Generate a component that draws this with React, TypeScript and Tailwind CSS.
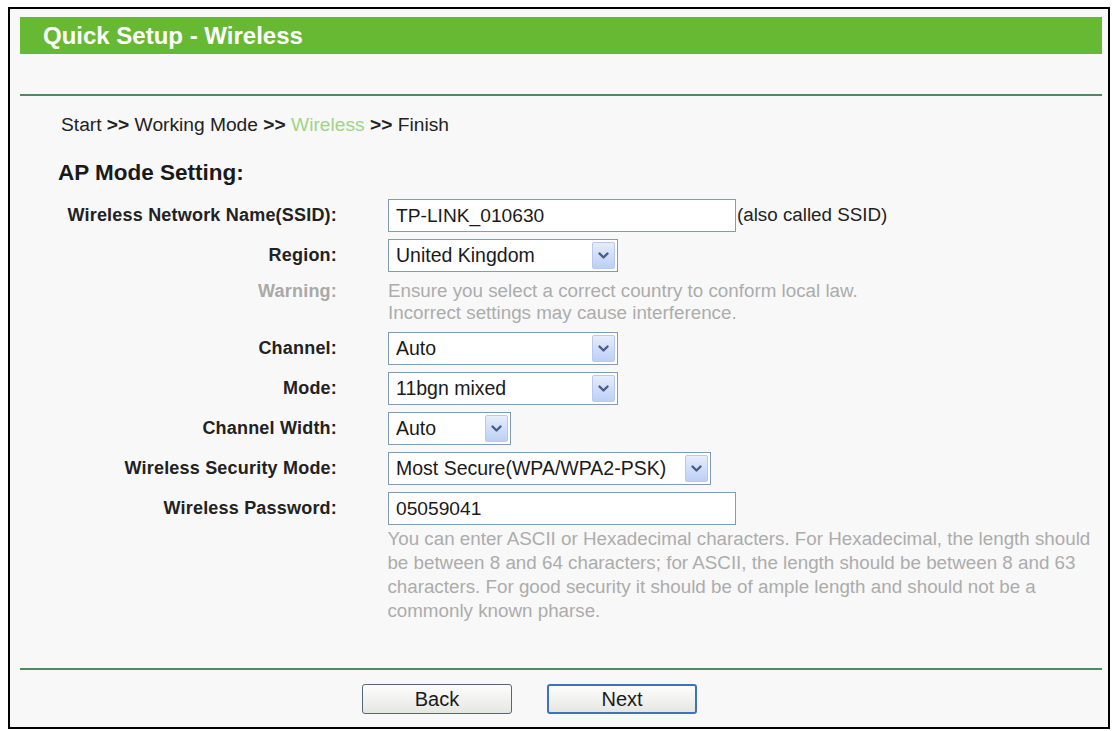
import type { ReactNode } from "react";

const LABEL_W = "w-[317px]";

function Chevron() {
  return (
    <svg width="11" height="8" viewBox="0 0 11 8" fill="none">
      <path
        d="M1.5 1.5 L5.5 5.5 L9.5 1.5"
        stroke="#4a5d86"
        strokeWidth="2.4"
        strokeLinecap="round"
        strokeLinejoin="round"
      />
    </svg>
  );
}

function Select({ value, width }: { value: string; width: string }) {
  return (
    <div
      className={`${width} h-[33px] border border-[#7f9db9] bg-white flex items-center pl-[7px] pr-[2px] text-[19.5px] text-[#1a1a1a]`}
    >
      <span className="flex-1 whitespace-nowrap overflow-hidden">{value}</span>
      <span className="w-[23px] h-[27px] rounded-[2px] border border-[#b7c9ee] bg-gradient-to-b from-[#e6edfc] to-[#bccff5] flex items-center justify-center">
        <Chevron />
      </span>
    </div>
  );
}

function TextBox({ value }: { value: string }) {
  return (
    <input
      type="text"
      defaultValue={value}
      className="w-[348px] h-[33px] border border-[#7f9db9] bg-white px-[7px] text-[19.2px] text-[#1a1a1a] outline-none"
    />
  );
}

function Row({ label, children }: { label: string; children: ReactNode }) {
  return (
    <div className="flex items-center h-[33px]">
      <div className={`${LABEL_W} text-right font-bold text-[18px] tracking-[0.2px] text-[#222]`}>
        {label}
      </div>
      <div className="ml-[51px] flex items-center">{children}</div>
    </div>
  );
}

export default function App() {
  return (
    <div className="w-[1118px] h-[731px] bg-white pt-[7px] pl-[8px] font-['Liberation_Sans',Arial,sans-serif]">
      <div className="w-[1102px] h-[722px] border-2 border-black bg-[#f8f8f8] pl-[10px] pr-[6px] pt-[8px]">
        <div className="h-[37px] bg-[#67b934] flex items-center pl-[23px] text-white font-bold text-[24px]">
          Quick Setup - Wireless
        </div>

        <div className="mt-[40px] h-[2px] bg-[#4f8b62]" />

        <div className="mt-[18px] h-[22px] leading-[22px] pl-[41px] text-[19.2px] text-[#222] whitespace-nowrap">
          Start <b>&gt;&gt;</b> Working Mode <b>&gt;&gt;</b>{" "}
          <span className="text-[#9ed58a]">Wireless</span> <b>&gt;&gt;</b> Finish
        </div>

        <div className="mt-[24px] leading-[26px] pl-[38px] text-[22.5px] font-bold text-[#1a1a1a]">
          AP Mode Setting:
        </div>

        <div className="mt-[13px] flex flex-col gap-[7px]">
          <Row label="Wireless Network Name(SSID):">
            <TextBox value="TP-LINK_010630" />
            <span className="text-[18.8px] text-[#222] ml-[1px]">(also called SSID)</span>
          </Row>
          <Row label="Region:">
            <Select value="United Kingdom" width="w-[230px]" />
          </Row>

          <div className="flex items-start h-[46px] pt-[1px] leading-[22px]">
            <div className={`${LABEL_W} text-right font-bold text-[18px] tracking-[0.2px] text-[#a9a9a9]`}>
              Warning:
            </div>
            <div className="ml-[51px] text-[18.8px] text-[#acacac]">
              Ensure you select a correct country to conform local law.
              <br />
              Incorrect settings may cause interference.
            </div>
          </div>

          <Row label="Channel:">
            <Select value="Auto" width="w-[230px]" />
          </Row>
          <Row label="Mode:">
            <Select value="11bgn mixed" width="w-[230px]" />
          </Row>
          <Row label="Channel Width:">
            <Select value="Auto" width="w-[123px]" />
          </Row>
          <Row label="Wireless Security Mode:">
            <Select value="Most Secure(WPA/WPA2-PSK)" width="w-[323px]" />
          </Row>
          <Row label="Wireless Password:">
            <TextBox value="05059041" />
          </Row>
        </div>

        <div className="mt-[2px] flex">
          <div className={LABEL_W} />
          <p className="ml-[51px] w-[716px] text-[18.8px] leading-[24px] text-[#acacac]">
            You can enter ASCII or Hexadecimal characters. For Hexadecimal, the length should
            be between 8 and 64 characters; for ASCII, the length should be between 8 and 63
            characters. For good security it should be of ample length and should not be a
            commonly known pharse.
          </p>
        </div>

        <div className="mt-[45px] h-[2px] bg-[#4f8b62]" />

        <div className="mt-[14px] flex pl-[342px] gap-[35px]">
          <button className="w-[150px] h-[30px] rounded-[3px] border border-[#56657c] bg-gradient-to-b from-[#fdfdfd] to-[#e6e6e1] text-[20px] text-[#1a1a1a] leading-none">
            Back
          </button>
          <button className="w-[150px] h-[30px] rounded-[3px] border-2 border-[#3f72b8] bg-gradient-to-b from-[#fdfdfd] to-[#e6e6e1] text-[20px] text-[#1a1a1a] leading-none">
            Next
          </button>
        </div>
      </div>
    </div>
  );
}
